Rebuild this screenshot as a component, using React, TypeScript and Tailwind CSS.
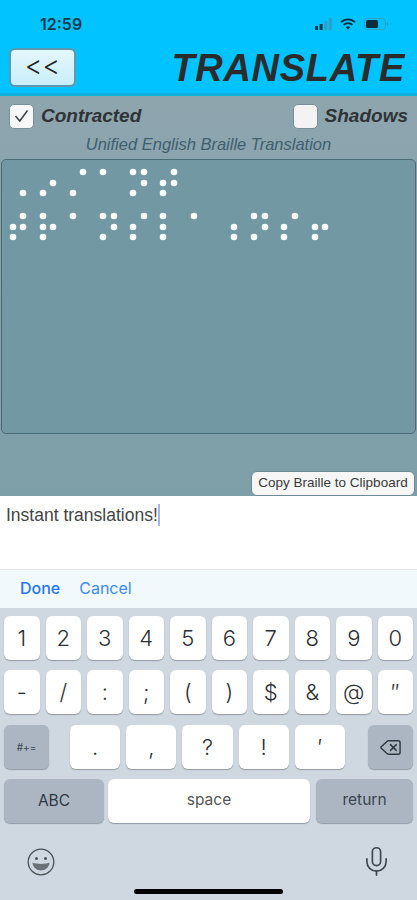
import { Mic, Delete } from 'lucide-react';

const DOTS: [number, number][] = [
  [83, 13], [103, 13], [133, 13], [144, 13], [174, 13],
  [53, 24], [144, 24], [163, 24], [174, 24],
  [23, 34], [43, 34], [73, 34], [133, 34], [163, 34],
  [23, 57], [43, 57], [73, 57], [103, 57], [114, 57], [144, 57], [163, 57], [194, 57], [254, 57], [265, 57], [295, 57],
  [13, 68], [23, 68], [43, 68], [53, 68], [114, 68], [133, 68], [163, 68], [234, 68], [265, 68], [284, 68], [315, 68], [325, 68],
  [13, 78], [43, 78], [103, 78], [133, 78], [163, 78], [234, 78], [254, 78], [284, 78], [315, 78],
];

const ROW_ONE = ['1', '2', '3', '4', '5', '6', '7', '8', '9', '0'];
const ROW_TWO = ['-', '/', ':', ';', '(', ')', '$', '&', '@', '″'];
const ROW_THREE = ['.', ',', '?', '!', '′'];

function Key({ label }: { label: string }) {
  return (
    <div className="flex h-[44px] flex-1 items-center justify-center rounded-[6px] bg-white text-[22px] font-light text-[#2b2f33] shadow-[0_1px_1px_#8f9aa5]">
      {label}
    </div>
  );
}

function StatusIcons() {
  return (
    <div className="flex items-center gap-[8px]">
      <svg width="17" height="12" viewBox="0 0 17 12">
        <rect x="0" y="8" width="3" height="4" rx="0.5" fill="#14384a" />
        <rect x="4.6" y="6" width="3" height="6" rx="0.5" fill="#14384a" />
        <rect x="9.2" y="3" width="3" height="9" rx="0.5" fill="#2f9fc4" />
        <rect x="13.8" y="0" width="3" height="12" rx="0.5" fill="#2f9fc4" />
      </svg>
      <svg width="16" height="12" viewBox="0 0 16 12" fill="none" stroke="#0c2c3c" strokeWidth="1.8">
        <path d="M1 4.2a10 10 0 0 1 14 0" />
        <path d="M3.6 6.9a6.2 6.2 0 0 1 8.8 0" />
        <path d="M8 11.5 5.9 9.3a3 3 0 0 1 4.2 0Z" fill="#0c2c3c" stroke="none" />
      </svg>
      <svg width="25" height="12" viewBox="0 0 25 12" fill="none">
        <rect x="0.5" y="0.5" width="21" height="11" rx="3" stroke="#2f9fc4" />
        <rect x="2" y="2" width="12" height="8" rx="1.5" fill="#0c2c3c" />
        <path d="M23 4v4c.8-.3 1.4-1.1 1.4-2s-.6-1.7-1.4-2Z" fill="#2f9fc4" />
      </svg>
    </div>
  );
}

function EmojiIcon() {
  return (
    <svg width="28" height="28" viewBox="0 0 28 28" fill="none">
      <circle cx="14" cy="14" r="12.8" stroke="#4a5258" strokeWidth="1.3" />
      <circle cx="9.5" cy="10.5" r="1.5" fill="#4a5258" />
      <circle cx="18.5" cy="10.5" r="1.5" fill="#4a5258" />
      <path d="M5.5 14.500c2.500 1 5.500 1.400 8.500 1.400s6-.4 8.500-1.400c-.3 4.800-4 8-8.500 8s-8.200-3.200-8.500-8Z" fill="#6a7278" />
    </svg>
  );
}

export default function App() {
  return (
    <div className="flex h-[900px] w-[417px] flex-col overflow-hidden bg-white font-['Liberation_Sans',sans-serif]">
      {/* Cyan header */}
      <div className="h-[96px] shrink-0 border-b-[3px] border-[#12b2de] bg-[#00c3ff]">
        <div className="flex h-[48px] items-center justify-between pl-[40px] pr-[28px]">
          <span className="font-['Inter',sans-serif] text-[16px] font-semibold text-[#0f3a4e]">12:59</span>
          <StatusIcons />
        </div>
        <div className="flex items-center justify-between pl-[9px] pr-[12px]">
          <div className="flex h-[39px] w-[67px] items-center justify-center rounded-[6px] border-2 border-[#5f97ae] bg-gradient-to-b from-[#e4f7fd] to-[#c9eefa] pb-[3px] font-['Inter',sans-serif] text-[27px] font-light text-[#222]">
            &lt;&lt;
          </div>
          <span className="text-[38px] font-bold italic leading-none tracking-[0.7px] text-[#2b2b2b]">TRANSLATE</span>
        </div>
      </div>

      {/* Braille panel */}
      <div className="flex h-[400px] shrink-0 flex-col bg-gradient-to-b from-[#8ea5ae] to-[#7d9fa8]">
        <div className="flex items-center justify-between pl-[9px] pr-[9px] pt-[6px]">
          <div className="flex items-center gap-[7px]">
            <div className="flex h-[25px] w-[25px] items-center justify-center rounded-[5px] border border-[#77909a] bg-[#f7f7f7]">
              <svg width="15" height="14" viewBox="0 0 15 14" fill="none" stroke="#3a3f44" strokeWidth="1.5">
                <path d="M1.5 7 5.800 12 13.500 1.500" />
              </svg>
            </div>
            <span className="text-[19px] font-bold italic text-[#2f3336]">Contracted</span>
          </div>
          <div className="flex items-center gap-[7px]">
            <div className="h-[25px] w-[25px] rounded-[5px] border border-[#77909a] bg-[#f3f3f3]" />
            <span className="text-[19px] font-bold italic text-[#2f3336]">Shadows</span>
          </div>
        </div>
        <p className="mt-[3px] text-center text-[16.5px] italic leading-[20px] text-[#3f5e6e]">
          Unified English Braille Translation
        </p>
        <div className="mx-[1px] mt-[5px] h-[275px] shrink-0 rounded-[5px] border border-[#4a6a75] bg-[#7299a3]">
          <svg width="412" height="100" viewBox="0 0 412 100" className="-ml-[2px] -mt-[1px]">
            {DOTS.map(([x, y], i) => (
              <circle key={i} cx={x} cy={y} r="3.3" fill="#fbfdfd" />
            ))}
          </svg>
        </div>
        <div className="mt-auto flex justify-end pr-[2px]">
          <div className="flex h-[25px] w-[164px] items-center justify-center rounded-[6px] border border-[#6d8b95] bg-[#f6f6f6] text-[13.5px] text-[#3a3a3a]">
            Copy Braille to Clipboard
          </div>
        </div>
      </div>

      {/* Text input */}
      <div className="flex h-[73px] shrink-0 items-start bg-white pl-[6px] pt-[7px] text-[17.5px] leading-[24px] text-[#444]">
        Instant translations!
        <span className="mt-[1px] h-[22px] w-[2px] bg-[#a9b3f0]" />
      </div>

      {/* Keyboard accessory bar */}
      <div className="flex h-[39px] shrink-0 items-center gap-[19px] border-t border-[#e2e9ee] bg-[#f2f9fd] pb-[2px] pl-[20px] font-['Inter',sans-serif] text-[16px]">
        <span className="font-medium text-[#1f78ee]">Done</span>
        <span className="text-[#3b8bf2]">Cancel</span>
      </div>

      {/* Keyboard */}
      <div className="flex flex-1 flex-col bg-[#cfd8e0] px-[4px] pt-[8px] font-['Inter',sans-serif]">
        <div className="flex gap-[6px]">
          {ROW_ONE.map((k) => (
            <Key key={k} label={k} />
          ))}
        </div>
        <div className="mt-[10px] flex gap-[6px]">
          {ROW_TWO.map((k) => (
            <Key key={k} label={k} />
          ))}
        </div>
        <div className="mt-[11px] flex items-center justify-between">
          <div className="flex h-[44px] w-[45px] items-center justify-center rounded-[6px] bg-[#abb6c2] text-[10px] text-[#3c4650] shadow-[0_1px_1px_#8f9aa5]">
            #+=
          </div>
          <div className="mr-[2px] flex w-[275px] gap-[6px]">
            {ROW_THREE.map((k) => (
              <Key key={k} label={k} />
            ))}
          </div>
          <div className="flex h-[44px] w-[45px] items-center justify-center rounded-[6px] bg-[#abb6c2] text-[#30383f] shadow-[0_1px_1px_#8f9aa5]">
            <Delete size={23} strokeWidth={1.5} />
          </div>
        </div>
        <div className="mt-[10px] flex gap-[4px] text-[15.5px]">
          <div className="flex h-[44px] w-[100px] items-center justify-center rounded-[6px] bg-[#abb6c2] text-[#2f3942] shadow-[0_1px_1px_#8f9aa5]">
            ABC
          </div>
          <div className="flex h-[44px] flex-1 items-center justify-center rounded-[6px] bg-white pb-[3px] text-[#555] shadow-[0_1px_1px_#8f9aa5]">
            space
          </div>
          <div className="ml-[2px] flex h-[44px] w-[97px] items-center justify-center rounded-[6px] bg-[#abb6c2] pb-[3px] text-[#3a444d] shadow-[0_1px_1px_#8f9aa5]">
            return
          </div>
        </div>
        <div className="mt-[22px] flex items-center justify-between pl-[23px] pr-[20px] text-[#3e464d]">
          <EmojiIcon />
          <Mic size={33} strokeWidth={1.2} />
        </div>
        <div className="mt-[11px] h-[5px] w-[149px] self-center rounded-full bg-black" />
      </div>
    </div>
  );
}
